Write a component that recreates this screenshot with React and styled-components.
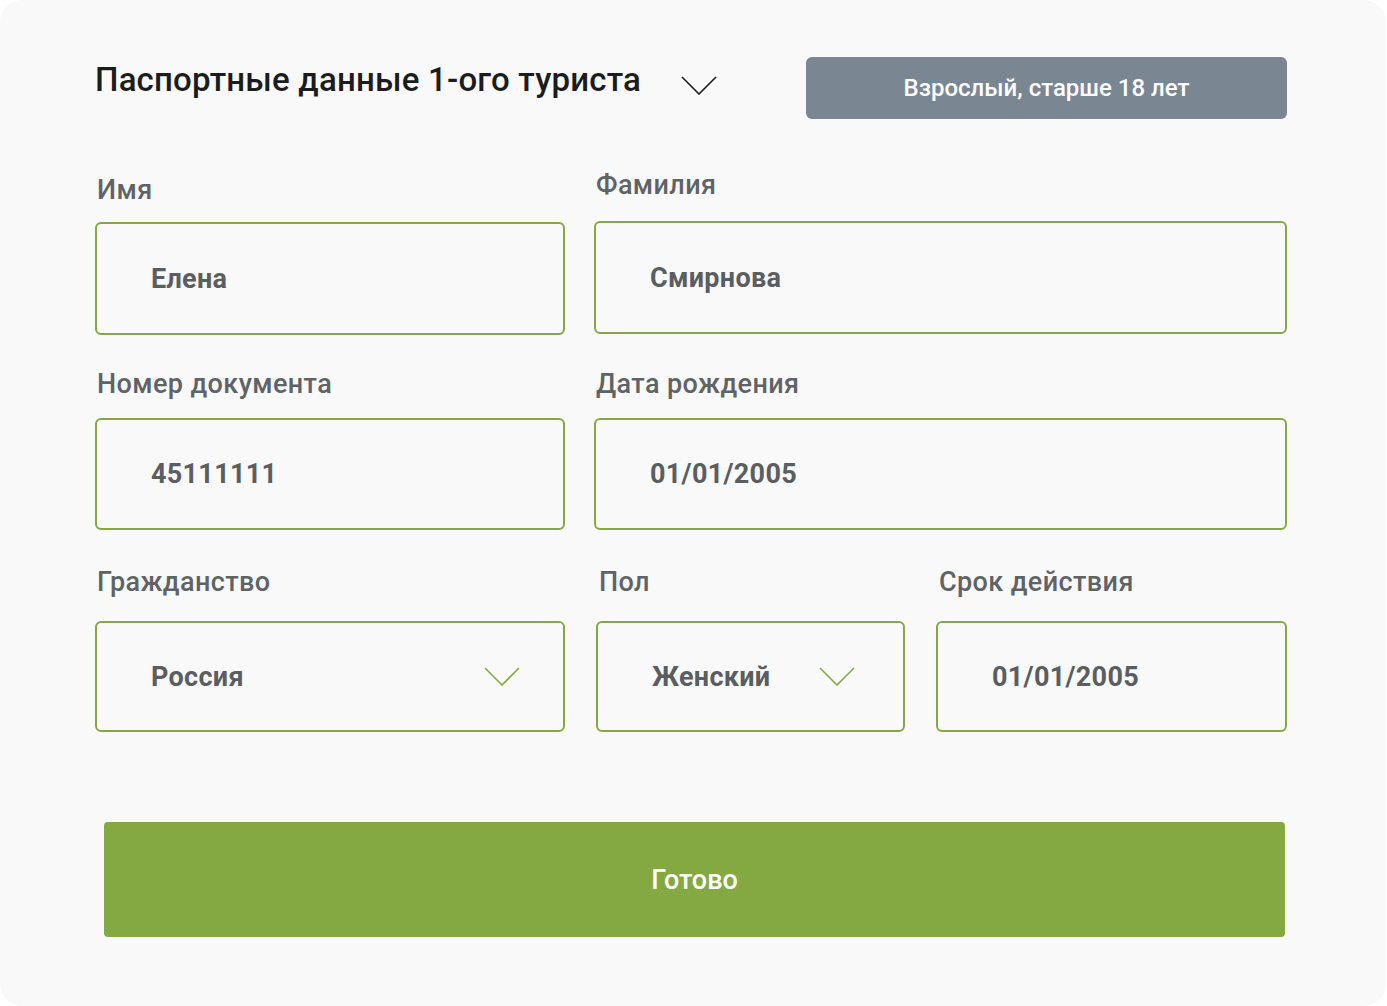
import React from "react";
import styled, { createGlobalStyle } from "styled-components";

const Global = createGlobalStyle`
  html, body { margin: 0; padding: 0; background: #ffffff; }
  body { font-family: Roboto, "Noto Sans", Arial, sans-serif; }
  * { box-sizing: border-box; }
`;

const Card = styled.div`
  width: 1386px;
  height: 1006px;
  background: #f9f9f9;
  border-radius: 22px;
  padding: 57px 99px 0 95px;
  display: flex;
  flex-direction: column;
`;

const Header = styled.div`
  display: flex;
  justify-content: space-between;
  align-items: flex-start;
`;

const TitleGroup = styled.div`
  display: flex;
  align-items: flex-start;
  gap: 40px;
  margin-top: 3px;
`;

const Title = styled.h1`
  margin: 0;
  font-family: Roboto, sans-serif;
  font-size: 33px;
  line-height: 40px;
  font-weight: 500;
  letter-spacing: 0.2px;
  color: #1b1c1e;
`;

const HeadIcon = styled.span`
  display: flex;
  margin-top: 16px;
`;

const Badge = styled.div`
  width: 481px;
  height: 62px;
  border-radius: 6px;
  background: #7a8692;
  color: #ffffff;
  font-family: Roboto, sans-serif;
  font-size: 24px;
  font-weight: 500;
  display: flex;
  align-items: center;
  justify-content: center;
`;

const Row = styled.div`
  display: grid;
  grid-template-columns: ${(p) => p.$cols};
  column-gap: ${(p) => p.$gap}px;
  margin-top: ${(p) => p.$top}px;
`;

const Field = styled.div`
  display: flex;
  flex-direction: column;
`;

const Label = styled.div`
  font-family: Roboto, sans-serif;
  font-size: 27px;
  line-height: 28px;
  font-weight: 500;
  letter-spacing: 0.4px;
  color: #606366;
  padding-left: ${(p) => p.$indent || 2}px;
  margin-top: ${(p) => p.$shift || 0}px;
  margin-bottom: ${(p) => p.$mb}px;
`;

const Box = styled.div`
  height: ${(p) => p.$h}px;
  border: 2px solid #85a845;
  border-radius: 6px;
  display: flex;
  align-items: center;
  justify-content: space-between;
  padding: 0 ${(p) => p.$padR || 44}px 0 ${(p) => p.$pad || 54}px;
`;

const Value = styled.span`
  font-family: Roboto, sans-serif;
  font-size: 27px;
  font-weight: 700;
  color: #5b5e61;
  letter-spacing: 0.3px;
`;

const Chevron = ({ color = "#1b1c1e", w = 36, h = 19, sw = 1.6 }) => (
  <svg width={w} height={h} viewBox="0 0 36 19" fill="none">
    <polyline points="1,1 18,18 35,1" stroke={color} strokeWidth={sw} fill="none" />
  </svg>
);

const SubmitButton = styled.button`
  margin: ${(p) => p.$top}px 2px 0 9px;
  height: 115px;
  border: none;
  border-radius: 4px;
  background: #84a842;
  color: #ffffff;
  font-family: Roboto, sans-serif;
  font-size: 27px;
  font-weight: 500;
  cursor: pointer;
`;

export default function App() {
  return (
    <>
      <Global />
      <Card>
        <Header>
          <TitleGroup>
            <Title>Паспортные данные 1-ого туриста</Title>
            <HeadIcon>
              <Chevron />
            </HeadIcon>
          </TitleGroup>
          <Badge>Взрослый, старше 18 лет</Badge>
        </Header>

        <Row $cols="470px 1fr" $gap={29} $top={57}>
          <Field>
            <Label $mb={18}>Имя</Label>
            <Box $h={113}><Value>Елена</Value></Box>
          </Field>
          <Field>
            <Label $mb={22} $shift={-5}>Фамилия</Label>
            <Box $h={113}><Value>Смирнова</Value></Box>
          </Field>
        </Row>

        <Row $cols="470px 1fr" $gap={29} $top={35}>
          <Field>
            <Label $mb={20}>Номер документа</Label>
            <Box $h={112}><Value>45111111</Value></Box>
          </Field>
          <Field>
            <Label $mb={20}>Дата рождения</Label>
            <Box $h={112}><Value>01/01/2005</Value></Box>
          </Field>
        </Row>

        <Row $cols="470px 309px 1fr" $gap={31} $top={38}>
          <Field>
            <Label $mb={25}>Гражданство</Label>
            <Box $h={111} $padR={43}>
              <Value>Россия</Value>
              <Chevron color="#84a842" />
            </Box>
          </Field>
          <Field>
            <Label $mb={25} $indent={3}>Пол</Label>
            <Box $h={111} $padR={48}>
              <Value>Женский</Value>
              <Chevron color="#84a842" />
            </Box>
          </Field>
          <Field>
            <Label $mb={25} $indent={3}>Срок действия</Label>
            <Box $h={111}><Value>01/01/2005</Value></Box>
          </Field>
        </Row>

        <SubmitButton $top={90}>Готово</SubmitButton>
      </Card>
    </>
  );
}
